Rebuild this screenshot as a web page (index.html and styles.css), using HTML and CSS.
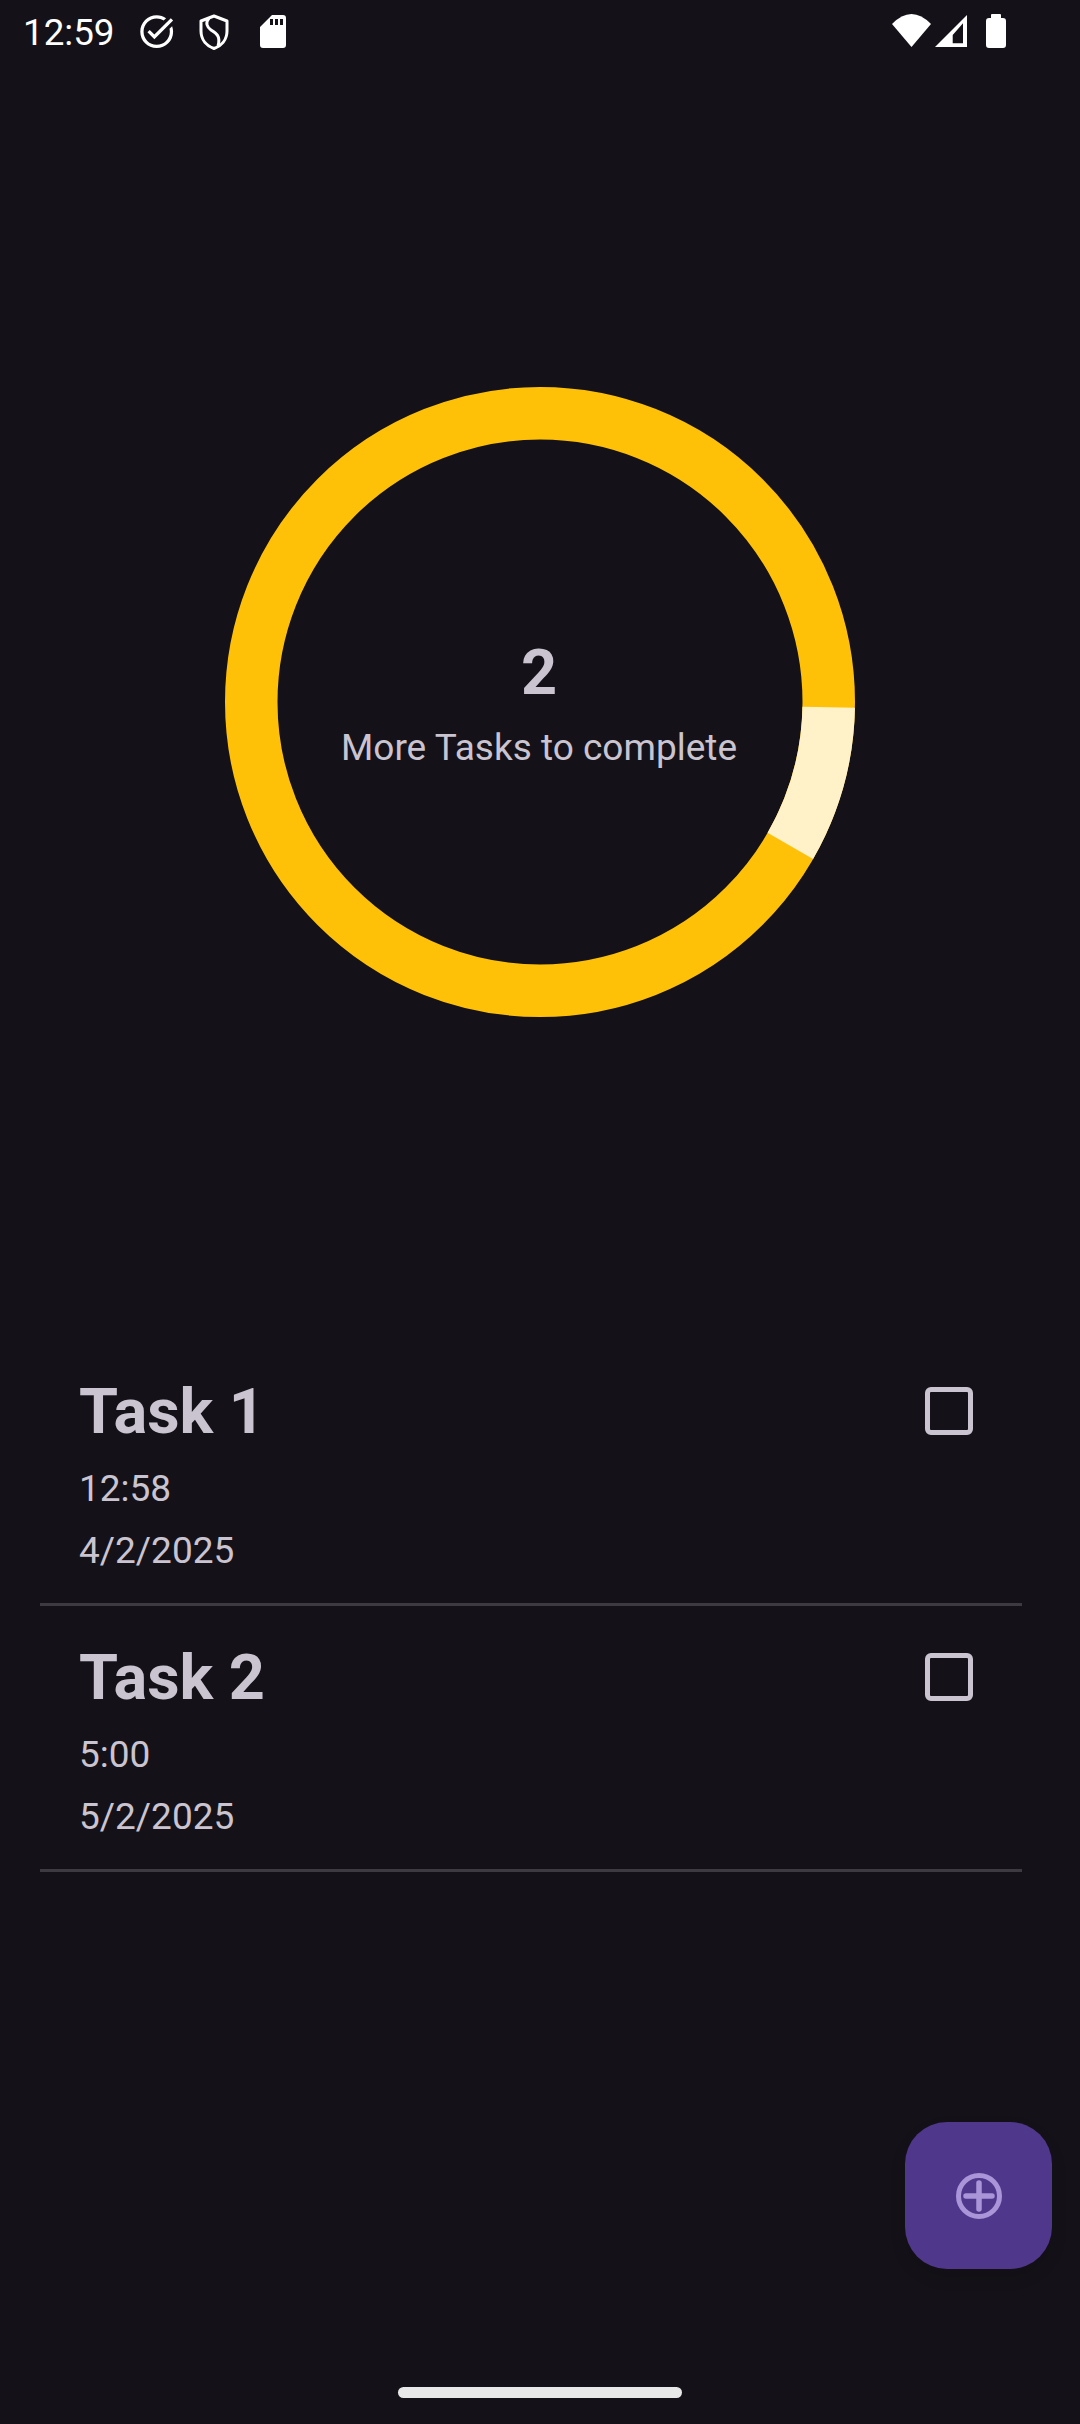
FILE: index.html
```html
<!DOCTYPE html>
<html lang="en">
<head>
<meta charset="utf-8">
<title>Tasks</title>
<link rel="stylesheet" href="styles.css">
</head>
<body>
<div class="app">
  <header class="status-bar">
    <div class="status-left">
      <span class="clock">12:59</span>
      <svg class="icon-check" viewBox="0 0 24 24"><path fill="#fff" d="M22 5.18 10.59 16.6l-4.24-4.24 1.41-1.41 2.83 2.83 10-10L22 5.18zm-2.21 5.04c.13.57.21 1.17.21 1.78 0 4.42-3.58 8-8 8s-8-3.58-8-8 3.58-8 8-8c1.58 0 3.04.46 4.28 1.21l1.44-1.44C16.1 2.67 14.13 2 12 2 6.48 2 2 6.48 2 12s4.48 10 10 10 10-4.48 10-10c0-1.19-.22-2.33-.6-3.39l-1.61 1.61z"/></svg>
      <svg class="icon-shield" viewBox="0 0 30 36"><path fill="none" stroke="#fff" stroke-width="3" stroke-linejoin="round" d="M15 2 2 7v10c0 9 6 15 13 17.500 7-2.500 13-8.500 13-17.500V7z"/><path fill="none" stroke="#fff" stroke-width="3" d="M10 4C6 9 8 13 12 16c5 3 10 6 7 16"/></svg>
      <svg class="icon-sd" viewBox="0 0 26 33"><path fill="#fff" fill-rule="evenodd" d="M12 0h11a3 3 0 0 1 3 3v27a3 3 0 0 1-3 3H3a3 3 0 0 1-3-3V12zM10 4v6h3V4zM15 4v6h3V4zM20 4v6h3V4z"/></svg>
    </div>
    <div class="status-right">
      <svg class="icon-wifi" viewBox="0 0 39 33"><path fill="#fff" d="M19.500 33 0 10Q19.500-10 39 10z"/></svg>
      <svg class="icon-signal" viewBox="0 0 32 32"><path fill="#fff" fill-rule="evenodd" d="M32 0v32H0zM28 8.300 17.700 20v8.300H28z"/></svg>
      <svg class="icon-battery" viewBox="0 0 20 34"><path fill="#fff" d="M5 1a1 1 0 0 1 1-1h8a1 1 0 0 1 1 1v3h2a3 3 0 0 1 3 3v24a3 3 0 0 1-3 3H3a3 3 0 0 1-3-3V7a3 3 0 0 1 3-3h2z"/></svg>
    </div>
  </header>

  <section class="chart">
    <div class="donut">
      <svg class="donut-svg" viewBox="0 0 630 630">
        <circle cx="315" cy="315" r="288.75" fill="none" stroke="#FFC107" stroke-width="52.5"/>
        <path fill="none" stroke="#FFF2C9" stroke-width="52.5" d="M603.7 320.29A288.75 288.75 0 0 1 565.32 458.94"/>
      </svg>
      <div class="donut-label">
        <div class="donut-count">2</div>
        <div class="donut-text">More Tasks to complete</div>
      </div>
    </div>
  </section>

  <section class="tasks">
    <article class="task">
      <div class="task-info">
        <h2 class="task-title">Task 1</h2>
        <p class="task-meta">12:58</p>
        <p class="task-meta">4/2/2025</p>
      </div>
      <span class="checkbox"></span>
    </article>
    <article class="task">
      <div class="task-info">
        <h2 class="task-title">Task 2</h2>
        <p class="task-meta">5:00</p>
        <p class="task-meta">5/2/2025</p>
      </div>
      <span class="checkbox"></span>
    </article>
  </section>

  <button class="fab" type="button" aria-label="Add task">
    <svg class="fab-icon" viewBox="0 0 46 46"><circle cx="23" cy="23" r="20.500" fill="none" stroke="#A995D8" stroke-width="5"/><path fill="none" stroke="#A995D8" stroke-width="5.500" stroke-linecap="round" d="M10 23h26M23 10v26"/></svg>
  </button>

  <div class="home-indicator"></div>
</div>
</body>
</html>
```
FILE: styles.css
```css
* { box-sizing: border-box; }
html, body { margin: 0; padding: 0; background: #141218; }
body { font-family: Roboto, "Noto Sans", sans-serif; color: #CAC4D0; }

.app {
  position: relative;
  width: 1080px;
  height: 2424px;
  overflow: hidden;
  background: #141218;
  display: flex;
  flex-direction: column;
}

.status-bar {
  height: 64px;
  flex: none;
  display: flex;
  justify-content: space-between;
  align-items: flex-start;
  padding: 12px 74px 0 23px;
}
.status-left, .status-right { display: flex; align-items: flex-start; }
.clock { font-size: 36.750px; line-height: 44px; color: #fff; width: 114px; margin-top: -1px; }
.status-left svg, .status-right svg { display: block; flex: none; }
.icon-check { width: 39.400px; height: 39.400px; }
.icon-shield { width: 30px; height: 36px; margin: 2px 0 0 23px; }
.icon-sd { width: 26px; height: 33px; margin: 3px 0 0 31px; }
.icon-wifi { width: 39px; height: 33px; margin-top: 2px; }
.icon-signal { width: 32px; height: 32px; margin: 3px 0 0 4px; }
.icon-battery { width: 20px; height: 34px; margin: 2px 0 0 19px; }

.chart {
  flex: none;
  display: flex;
  justify-content: center;
  padding-top: 323px;
}
.donut { position: relative; width: 630px; height: 630px; }
.donut-svg { display: block; width: 630px; height: 630px; }
.donut-label {
  position: absolute;
  inset: 0;
  padding: 4px 2px 0 0;
  display: flex;
  flex-direction: column;
  align-items: center;
  justify-content: center;
}
.donut-count { font-size: 63px; font-weight: 700; line-height: 74px; }
.donut-text { margin-top: 14px; font-size: 37px; line-height: 48px; }

.tasks {
  flex: none;
  margin: 323px 0 0 40px;
  width: 982px;
}
.task {
  height: 266px;
  display: flex;
  justify-content: space-between;
  align-items: flex-start;
  border-bottom: 3px solid #3D3A42;
  padding: 0 49px 0 39px;
}
.task-title { margin: 0 0 9px; padding-top: 35px; font-size: 63px; font-weight: 700; line-height: 74px; }
.task-meta { margin: 0; font-size: 37px; line-height: 62px; }
.checkbox {
  width: 48px;
  height: 48px;
  margin-top: 47px;
  border: 5px solid #CAC4D0;
  border-radius: 6px;
  flex: none;
}

.fab {
  position: absolute;
  left: 905px;
  top: 2122px;
  width: 147px;
  height: 147px;
  padding: 0;
  border: 0;
  border-radius: 42px;
  background: #4F378B;
  box-shadow: 0 8px 16px rgba(0, 0, 0, .12);
  display: flex;
  align-items: center;
  justify-content: center;
}
.fab-icon { display: block; width: 46px; height: 46px; }

.home-indicator {
  position: absolute;
  left: 398px;
  top: 2387px;
  width: 284px;
  height: 11px;
  border-radius: 6px;
  background: #E8E8E8;
}
```
